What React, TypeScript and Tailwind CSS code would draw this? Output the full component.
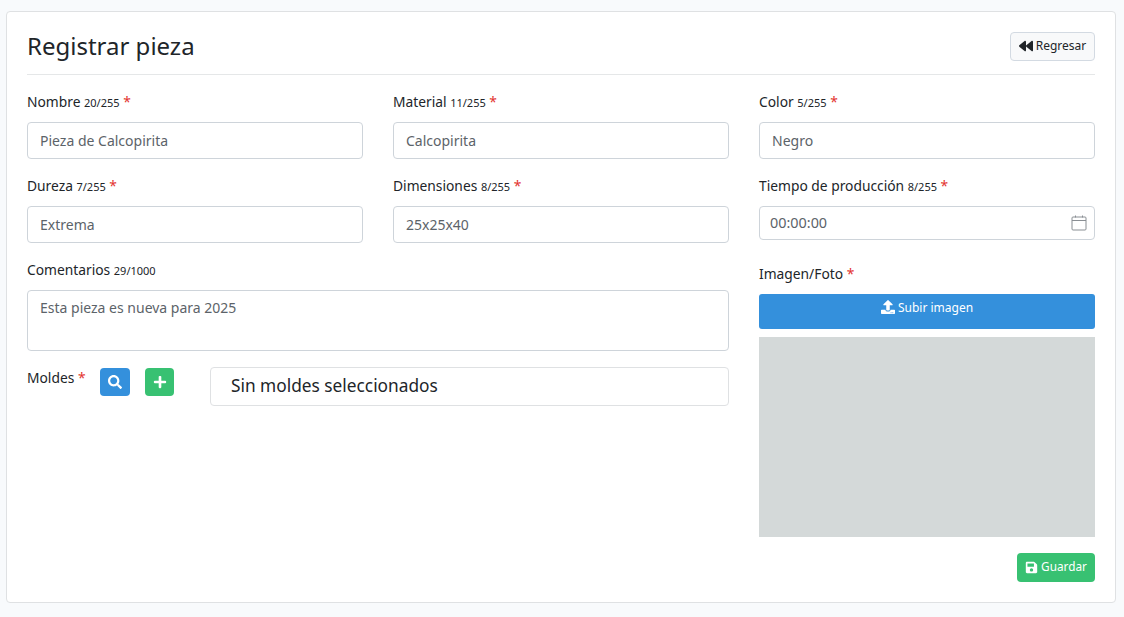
import { ReactNode } from "react";
import { FaBackward, FaPlus, FaSave, FaSearch, FaUpload } from "react-icons/fa";

interface FieldProps {
  label: string;
  count?: string;
  value: string;
  required?: boolean;
}

const Label = ({ label, count, required = true }: { label: string; count?: string; required?: boolean }) => (
  <div className="h-[20px] text-[13.8px] leading-[20px] text-[#212529] whitespace-nowrap">
    {label} {count && <span className="text-[11px]">{count}</span>}{" "}
    {required && <span className="text-[#e3342f]">*</span>}
  </div>
);

const Field = ({ label, count, value, required }: FieldProps) => (
  <div>
    <Label label={label} count={count} required={required} />
    <div className="mt-[10px] h-[37px] rounded border border-[#ced4da] bg-white pl-[12px] flex items-center text-[14px] text-[#5c6369]">
      {value}
    </div>
  </div>
);

const CalendarIcon = () => (
  <svg width="16" height="16" viewBox="0 0 16 16" fill="none" stroke="#8a8f94" strokeWidth="1">
    <rect x="1" y="2" width="14" height="13" rx="1" />
    <path d="M1 5.5h14M4.5 0.5v2M11.5 0.5v2" />
  </svg>
);

const SquareButton = ({ color, children }: { color: string; children: ReactNode }) => (
  <button className={`flex h-[28px] items-center justify-center rounded text-white ${color}`}>{children}</button>
);

export default function App() {
  return (
    <div className="min-h-[617px] bg-[#f8fafc] pl-[6px] pr-[8px] pt-[11px] font-['Noto_Sans',sans-serif]">
      <div className="h-[592px] rounded border border-[#dfe1e3] bg-white px-[20px] pt-[20px]">
        <div className="flex h-[43px] items-start justify-between border-b border-[#e5e7e8]">
          <h1 className="-mt-[1px] text-[24px] leading-[30px] text-[#212529]">Registrar pieza</h1>
          <button className="flex h-[29px] w-[85px] items-center justify-center gap-[3px] rounded border border-[#d3dae2] bg-[#f8f9fa] pb-[1px] text-[12px] text-[#212529]">
            <FaBackward className="text-[14px]" /> Regresar
          </button>
        </div>

        <div className="mt-[17px] grid grid-cols-3 gap-x-[30px]">
          <div className="col-span-2">
            <div className="grid grid-cols-2 gap-x-[30px] gap-y-[17px]">
              <Field label="Nombre" count="20/255" value="Pieza de Calcopirita" />
              <Field label="Material" count="11/255" value="Calcopirita" />
              <Field label="Dureza" count="7/255" value="Extrema" />
              <Field label="Dimensiones" count="8/255" value="25x25x40" />
            </div>

            <div className="mt-[17px]">
              <Label label="Comentarios" count="29/1000" required={false} />
              <div className="mt-[10px] h-[61px] rounded border border-[#ced4da] px-[12px] pt-[6px] text-[14px] leading-[22px] text-[#5c6369]">
                Esta pieza es nueva para 2025
              </div>
            </div>

            <div className="mt-[16px] flex items-start">
              <div className="w-[73px] pt-[1px]">
                <Label label="Moldes" />
              </div>
              <div className="mt-[1px] flex gap-[15px]">
                <SquareButton color="w-[30px] bg-[#3490dc]">
                  <FaSearch className="text-[14px]" />
                </SquareButton>
                <SquareButton color="w-[29px] bg-[#38c172]">
                  <FaPlus className="text-[14px]" />
                </SquareButton>
              </div>
              <div className="ml-[36px] flex h-[39px] flex-1 items-center rounded border border-[#dfe1e3] pl-[20px] text-[17.3px] text-[#212529]">
                <span className="-mt-[2px]">Sin moldes seleccionados</span>
              </div>
            </div>
          </div>

          <div className="flex flex-col">
            <Field label="Color" count="5/255" value="Negro" />
            <div className="mt-[17px]">
              <Label label="Tiempo de producción" count="8/255" />
              <div className="mt-[10px] flex h-[34px] items-center justify-between rounded border border-[#ced4da] pl-[10px] pr-[7px] text-[14.4px] text-[#5c6369]">
                00:00:00
                <CalendarIcon />
              </div>
            </div>
            <div className="mt-[24px]">
              <Label label="Imagen/Foto" />
            </div>
            <button className="mt-[10px] flex h-[35px] items-start justify-center gap-[3px] rounded-[3px] bg-[#3490dc] pt-[5px] text-[12px] leading-[17px] text-white">
              <FaUpload className="mt-[1px] text-[14px]" /> Subir imagen
            </button>
            <div className="mt-[8px] h-[200px] bg-[#d4d9d9]" />
            <div className="mt-[16px] flex justify-end">
              <button className="flex h-[29px] w-[78px] items-center justify-center gap-[3px] rounded bg-[#38c172] pb-[1px] text-[11.8px] text-white">
                <FaSave className="text-[13px]" /> Guardar
              </button>
            </div>
          </div>
        </div>
      </div>
    </div>
  );
}
